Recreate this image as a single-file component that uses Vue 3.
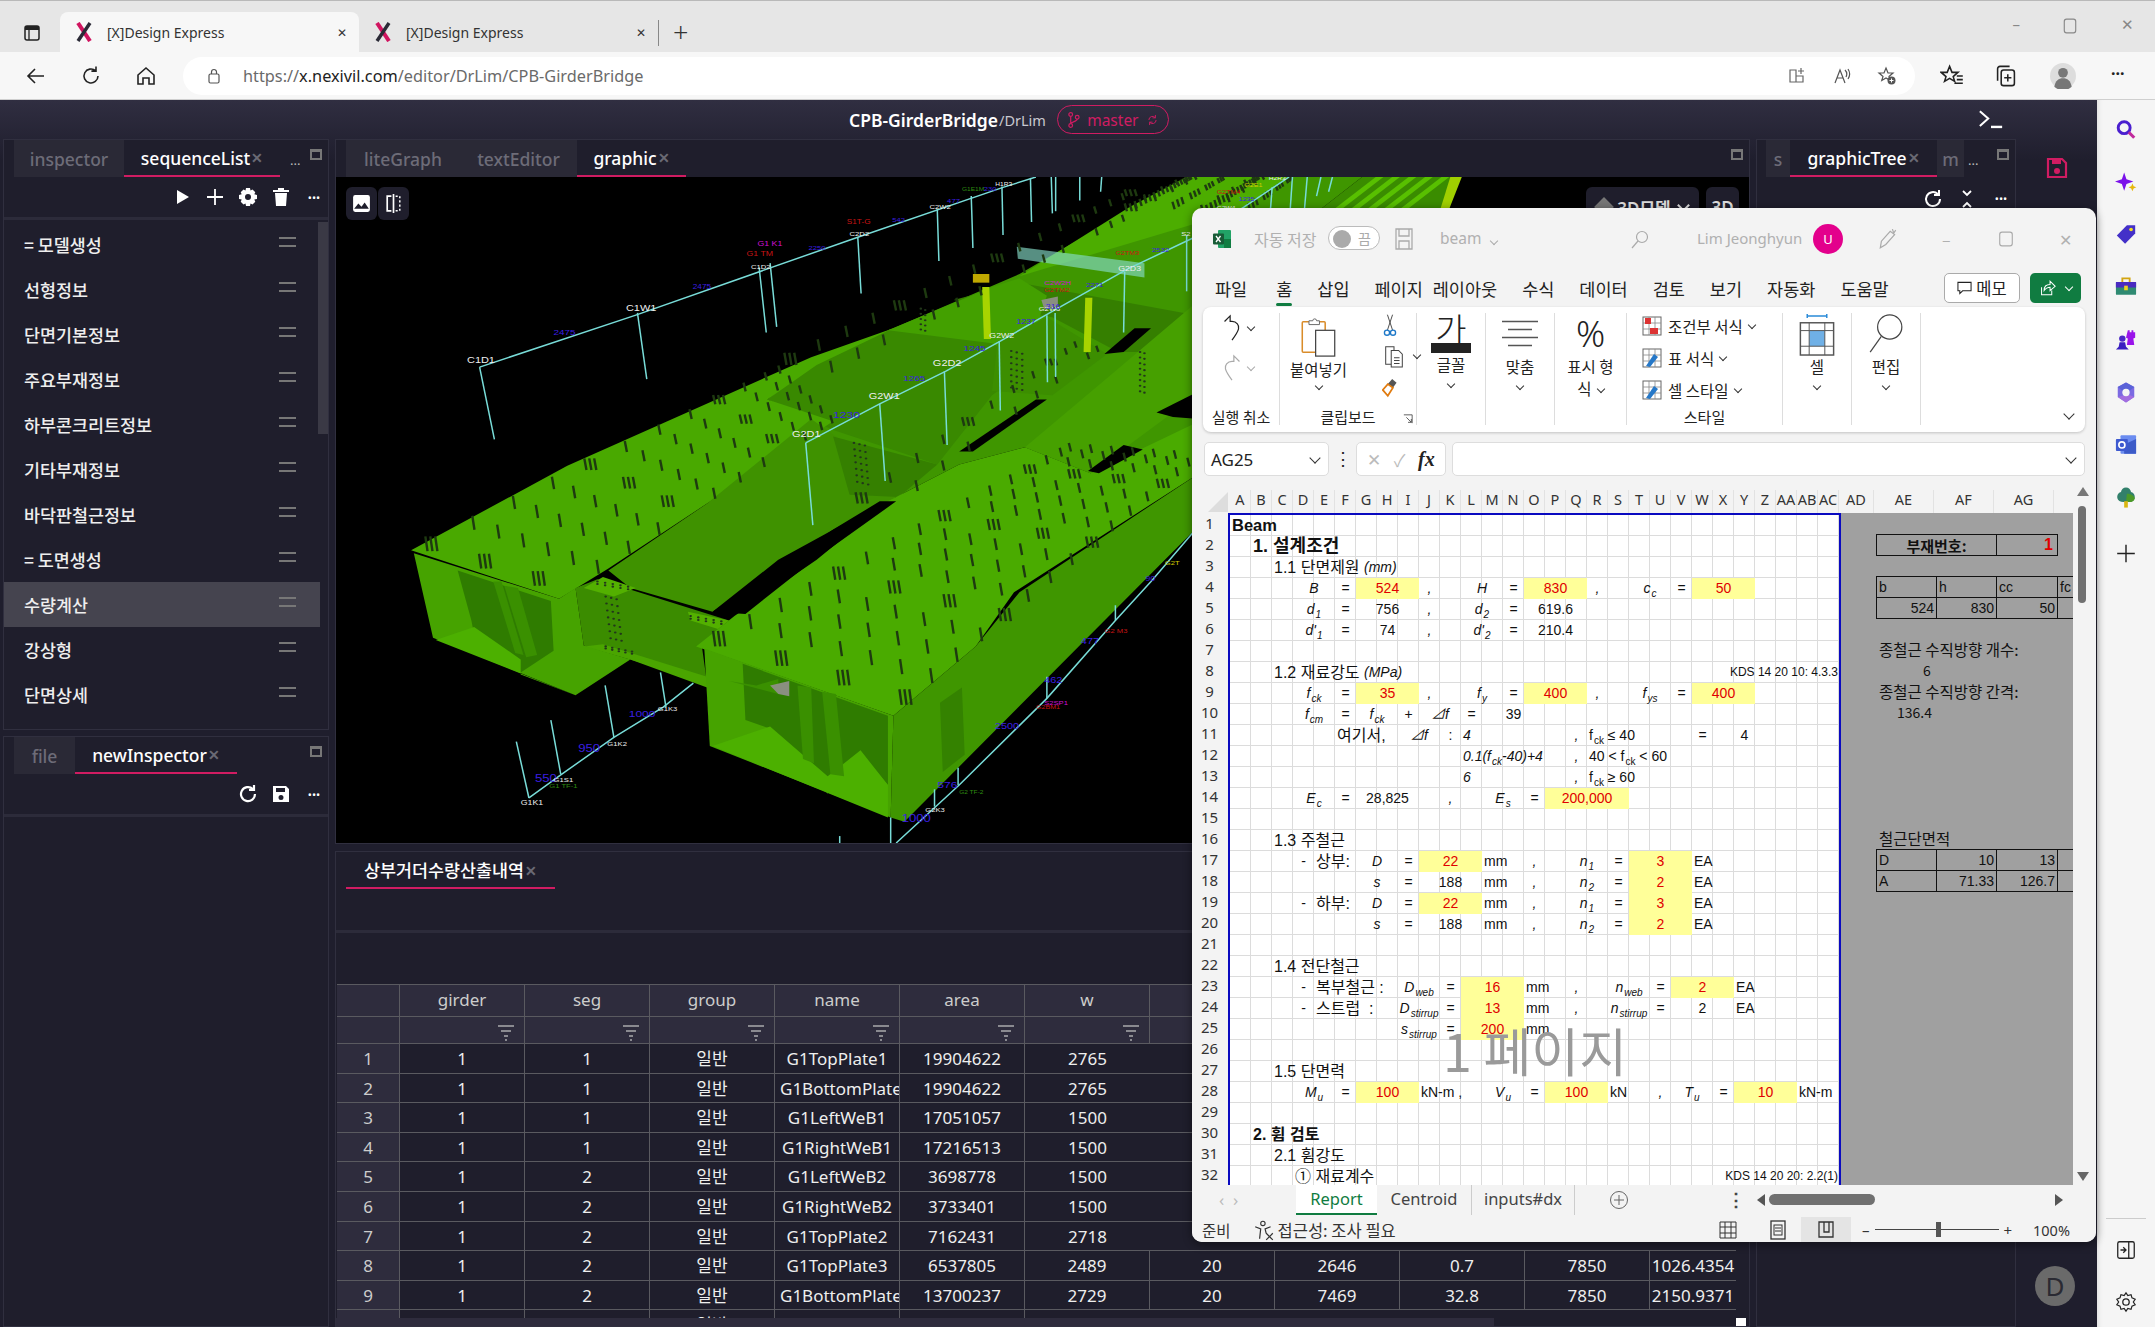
<template>
  <div class="page">
    <!-- browser chrome -->
    <div class="tabstrip">
      <svg class="strip-ico" viewBox="0 0 20 20"><rect x="3" y="3" width="14" height="14" rx="2" fill="none" stroke="#222" stroke-width="1.5"/><rect x="3" y="3" width="14" height="4" fill="#222"/><path d="M7 7v10" stroke="#222" stroke-width="1.3"/></svg>
      <div v-for="(t, i) in browserTabs" :key="i" class="btab" :class="{ on: i === 0 }">
        <svg class="x-logo" viewBox="0 0 16 20"><path d="M2 1l12 18" stroke="#d0145f" stroke-width="4"/><path d="M14 1L2 19" stroke="#2b2a36" stroke-width="3.4"/></svg>
        <span class="btab-title">{{ t }}</span>
        <span class="btab-x">✕</span>
      </div>
      <div class="tab-sep"></div>
      <span class="tab-plus">+</span>
      <div class="win-btns">
        <span class="wb">–</span>
        <svg class="wb-box" viewBox="0 0 14 14"><rect x="2" y="1" width="10" height="12" rx="2" fill="none" stroke="#888"/></svg>
        <span class="wb">✕</span>
      </div>
    </div>
    <div class="toolbar">
      <svg class="nav" viewBox="0 0 24 24"><path d="M20 12H5m6-7l-7 7 7 7" fill="none" stroke="#222" stroke-width="1.6"/></svg>
      <svg class="nav" viewBox="0 0 24 24"><path d="M19 12a7 7 0 1 1-2.4-5.3M17 2.5v4.6h-4.6" fill="none" stroke="#222" stroke-width="1.6"/></svg>
      <svg class="nav" viewBox="0 0 24 24"><path d="M4 11l8-7 8 7v9h-5v-6H9v6H4z" fill="none" stroke="#222" stroke-width="1.6"/></svg>
      <div class="address">
        <svg class="lock" viewBox="0 0 16 16"><rect x="3" y="6" width="10" height="9" rx="1.5" fill="none" stroke="#555" stroke-width="1.2"/><path d="M5.5 6V4a2.5 2.5 0 0 1 5 0v2" fill="none" stroke="#555" stroke-width="1.2"/></svg>
        <span class="url">https://<b>x.nexivil.com</b>/editor/DrLim/CPB-GirderBridge</span>
        <div class="addr-icons">
          <svg viewBox="0 0 20 20"><path d="M3 4h6v12H3zM9 10h7v6H9zM14 2v6M11 5h6" fill="none" stroke="#666" stroke-width="1.2"/></svg>
          <svg viewBox="0 0 20 20"><path d="M3 17L8 4l5 13M5 12h6M13 4c2 2 2 5 1 7M16 3c2 3 2 7 0 10" fill="none" stroke="#555" stroke-width="1.2"/></svg>
          <svg viewBox="0 0 20 20"><path d="M9 2l2 5h5l-4 3.5 1.2 4-4.2-2.6-4.2 2.6L6 10.500 2 7h5z" fill="none" stroke="#555" stroke-width="1.2"/><circle cx="14.500" cy="14.500" r="4" fill="#555"/><path d="M14.500 12.500v4M12.500 14.500h4" stroke="#fff"/></svg>
        </div>
      </div>
      <svg class="tool-ico" viewBox="0 0 20 20"><path d="M8 2l2 5h5l-4 3.500 1.200 4L8 12l-4.200 2.500 1.200-4L1 7h5zM14 10h5M14 13h5M12 16h7" fill="none" stroke="#222" stroke-width="1.3"/></svg>
      <svg class="tool-ico" viewBox="0 0 20 20"><rect x="6" y="5" width="11" height="13" rx="2" fill="none" stroke="#222" stroke-width="1.3"/><path d="M3 14V4a2 2 0 0 1 2-2h8M11.500 8.500v6M8.500 11.500h6" fill="none" stroke="#222" stroke-width="1.3"/></svg>
      <svg class="avatar-ico" viewBox="0 0 24 24"><circle cx="12" cy="12" r="12" fill="#ddd"/><circle cx="12" cy="9" r="4.500" fill="#777"/><path d="M4 22c1-6 4-8 8-8s7 2 8 8a12 12 0 0 1-16 0z" fill="#777"/></svg>
      <span class="tool-more">···</span>
    </div>

    <div class="body">
      <div class="app">
        <header class="app-head">
          <span class="repo">CPB-GirderBridge</span><span class="repo-user">/DrLim</span>
          <span class="branch">
            <svg viewBox="0 0 14 20"><circle cx="4" cy="4" r="2" fill="none" stroke="#d01c62" stroke-width="1.3"/><circle cx="4" cy="16" r="2" fill="none" stroke="#d01c62" stroke-width="1.3"/><circle cx="11" cy="7" r="2" fill="none" stroke="#d01c62" stroke-width="1.3"/><path d="M4 6v8M11 9c0 3-7 3-7 5" fill="none" stroke="#d01c62" stroke-width="1.3"/></svg>
            master
            <svg viewBox="0 0 18 20"><path d="M14 10a5 5 0 0 1-9 3M4 10a5 5 0 0 1 9-3M13 3v4H9M5 17v-4h4" fill="none" stroke="#d01c62" stroke-width="1.3"/></svg>
          </span>
          <svg class="term" viewBox="0 0 28 22"><path d="M2 2l9 8-9 8" fill="none" stroke="#fff" stroke-width="2.200"/><path d="M14 19h12" stroke="#fff" stroke-width="2.600"/></svg>
        </header>

        <div class="work">
          <!-- left column -->
          <div class="col-left">
            <section class="panel seq">
              <div class="tabs">
                <span class="tab" style="width: 110px">inspector</span>
                <span class="tab on" style="width: 156px">sequenceList<i class="tx">✕</i></span>
                <span class="tab-more">...</span>
                <span class="maxi"></span>
              </div>
              <div class="tools">
                <svg viewBox="0 0 20 20"><path d="M5 3l12 7-12 7z" fill="#fff"/></svg>
                <svg viewBox="0 0 20 20"><path d="M10 2v16M2 10h16" stroke="#fff" stroke-width="1.800"/></svg>
                <svg viewBox="0 0 20 20"><path fill="#fff" fill-rule="evenodd" d="M8 1h4l.5 2.500 2-1 2.800 2.800-1 2 2.700.7v4l-2.700.5 1 2.200-2.800 2.800-2-1-.5 2.500H8l-.5-2.500-2 1-2.800-2.800 1-2.200L1 12V8l2.700-.7-1-2 2.800-2.800 2 1zM10 7a3 3 0 1 0 0 6 3 3 0 0 0 0-6z"/></svg>
                <svg viewBox="0 0 20 20"><path d="M7 1h6v2h5v2H2V3h5zM4 6h12l-1 13H5z" fill="#fff"/></svg>
                <span class="dots">•••</span>
              </div>
              <div class="seq-list">
                <div v-for="(s, i) in sequences" :key="i" class="seq-row" :class="{ sel: i === 8 }">
                  <span>{{ s }}</span><span class="grip"></span>
                </div>
                <div class="seq-scroll"></div>
              </div>
            </section>
            <section class="panel grow">
              <div class="tabs">
                <span class="tab" style="width: 61px">file</span>
                <span class="tab on" style="width: 162px">newInspector<i class="tx">✕</i></span>
                <span class="maxi"></span>
              </div>
              <div class="tools">
                <svg viewBox="0 0 20 20"><path d="M17 10a7 7 0 1 1-2.200-5M16 1v5h-5" fill="none" stroke="#fff" stroke-width="2.200"/></svg>
                <svg viewBox="0 0 20 20"><path fill="#fff" fill-rule="evenodd" d="M2 2h13l3 3v13H2zM5 4v4h9V4zM10 11a2.500 2.500 0 1 0 0 5 2.500 2.500 0 0 0 0-5z"/></svg>
                <span class="dots">•••</span>
              </div>
            </section>
          </div>

          <!-- center column -->
          <div class="col-mid">
            <section class="panel gfx">
              <div class="tabs">
                <span class="tab" style="width: 114px">liteGraph</span>
                <span class="tab" style="width: 117px">textEditor</span>
                <span class="tab on" style="width: 109px">graphic<i class="tx">✕</i></span>
                <span class="maxi"></span>
              </div>
              <div class="canvas">
                <svg class="scene" viewBox="-7 16 2578 1538" preserveAspectRatio="none">
                  <polygon v-for="(p, i) in scenePolys" :key="i" :points="p.pts" :fill="p.fill" :fill-opacity="p.op || 1"/>
                  <line v-for="(s, i) in studs" :key="'s' + i" :x1="s[0]" :y1="s[1]" :x2="s[2]" :y2="s[3]" stroke="#1e3a10" class="stud"/>
                  <circle v-for="(d, i) in bolts" :key="'b' + i" :cx="d[0]" :cy="d[1]" r="2.400" fill="#22381a"/>
                  <polyline v-for="(l, i) in cyanLines" :key="'c' + i" :points="l" fill="none" stroke="#78dcd8" class="thin"/>
                  <text v-for="(t, i) in labels" :key="'t' + i" :x="t[0]" :y="t[1]" :fill="t[3]" :font-size="t[4] || 20" class="scene-txt">{{ t[2] }}</text>
                </svg>
                <div class="view-btns">
                  <span class="vb"><svg viewBox="0 0 20 20"><rect x="2" y="2" width="16" height="16" rx="2" fill="#fff"/><path d="M3 15l4-5 3 3 3-4 4 6z" fill="#1e1d2b"/></svg></span>
                  <span class="vb"><svg viewBox="0 0 20 20"><path d="M8 3H4v14h4M10 1v18" fill="none" stroke="#fff" stroke-width="1.600"/><path d="M12 3h4v14h-4" fill="none" stroke="#fff" stroke-width="1.400" stroke-dasharray="2 2"/></svg></span>
                </div>
                <div class="model-btns">
                  <span class="mb wide"><i class="diamond"></i>3D모델 <b class="cv lt"></b></span>
                  <span class="mb">3D</span>
                </div>
              </div>
            </section>
            <section class="panel grow tbl-panel">
              <div class="tabs thin-tabs">
                <span class="tab on" style="width: 209px">상부거더수량산출내역<i class="tx">✕</i></span>
              </div>
              <div class="tbl-tools"></div>
              <div class="tbl-gap"></div>
              <div class="tbl">
                <div class="trow thead">
                  <span v-for="(h, i) in tableHead" :key="i">{{ h }}</span>
                </div>
                <div class="trow tfilter">
                  <span v-for="(h, i) in tableHead" :key="i">
                    <svg v-if="i > 0 && i < 7" viewBox="0 0 18 18"><path d="M1 2h16M4 7h10M7 12h4M8 16h2" stroke="#8a8a90" stroke-width="2"/></svg>
                  </span>
                </div>
                <div v-for="(row, i) in tableRows" :key="i" class="trow tbody">
                  <span v-for="(v, j) in row" :key="j">{{ v }}</span>
                </div>
              </div>
              <div class="tbl-scroll"><i class="tbl-thumb"></i><i class="tbl-corner"></i></div>
            </section>
          </div>

          <!-- right column -->
          <section class="panel col-right">
            <div class="tabs">
              <span class="tab" style="width: 24px">s</span>
              <span class="tab on" style="width: 147px">graphicTree<i class="tx">✕</i></span>
              <span class="tab" style="width: 27px">m</span>
              <span class="tab-more">...</span>
              <span class="maxi"></span>
            </div>
            <div class="tools">
              <svg viewBox="0 0 20 20"><path d="M17 10a7 7 0 1 1-2.200-5M16 1v5h-5" fill="none" stroke="#fff" stroke-width="2"/></svg>
              <svg viewBox="0 0 20 20"><path d="M6 2l4 4 4-4M6 18l4-4 4 4" fill="none" stroke="#fff" stroke-width="1.800"/></svg>
              <span class="dots">•••</span>
            </div>
          </section>
          <div class="col-far">
            <svg class="far-save" viewBox="0 0 24 24"><path d="M3 3h14l4 4v14H3z" fill="none" stroke="#d01c62" stroke-width="2.200"/><path d="M7 3h9v5H7z" fill="#d01c62"/><circle cx="12" cy="15" r="3" fill="#d01c62"/></svg>
            <span class="far-avatar">D</span>
          </div>
        </div>
      </div>

      <!-- edge sidebar -->
      <aside class="edge">
        <svg viewBox="0 0 24 24"><circle cx="10" cy="10" r="6.500" fill="none" stroke="#4a1fcf" stroke-width="3.200"/><path d="M15 15l6 6" stroke="#c02a9c" stroke-width="3.400"/></svg>
        <svg viewBox="0 0 24 24"><path d="M10 1l2.500 7.500L20 11l-7.500 2.500L10 21l-2.500-7.500L0 11l7.500-2.500z" fill="#7a10ea"/><path d="M19 13l1.300 3 3 1.300-3 1.300-1.300 3-1.300-3-3-1.300 3-1.300z" fill="#e6b70c"/></svg>
        <svg viewBox="0 0 24 24"><path d="M13 2h9v9L11 22 2 13z" fill="#4330c8"/><circle cx="17.500" cy="6.500" r="2" fill="#f1e020"/></svg>
        <svg viewBox="0 0 24 24"><path d="M8 6V2h8v4" fill="none" stroke="#d3a512" stroke-width="2"/><rect x="1" y="6" width="22" height="14" rx="1" fill="#2f8a72"/><rect x="1" y="6" width="22" height="6" fill="#4a2bc0"/><rect x="10" y="10" width="4" height="5" fill="#f1d020"/></svg>
        <svg viewBox="0 0 24 24"><circle cx="8" cy="11" r="3.500" fill="#4a27c8"/><path d="M5 15h6l1 5 3 3H1l3-3z" fill="#3a1fc0"/><path d="M14 2h2v2h2V2h2v2h2V2v8l-2 1 1 7h-8l1-7-2-1z" fill="#9a14ea"/></svg>
        <svg viewBox="0 0 24 24"><path d="M12 1l9 5v11l-9 6-9-6V6z" fill="#7b6ae2"/><path d="M3 6l9-5 9 5-5 4H8z" fill="#5a62d8"/><path d="M3 17l9 6 9-6-7-3z" fill="#a36de0"/><circle cx="12" cy="12" r="4" fill="#f5f5f5"/></svg>
        <svg viewBox="0 0 24 24"><rect x="6" y="2" width="17" height="20" rx="1" fill="#6b8cf0"/><path d="M10 12l13-6v16H10z" fill="#3c5bc8"/><rect x="1" y="6" width="13" height="13" rx="1" fill="#3e5ad0"/><circle cx="7.500" cy="12.500" r="3.300" fill="none" stroke="#fff" stroke-width="1.800"/></svg>
        <svg viewBox="0 0 24 24"><path d="M12 1c3 0 5 2 5.500 5 3 .8 4.500 3.500 4 6.500-.5 3-3 4.500-6 4.500H9c-3 0-6-1.500-6.500-4.500C2 9.500 3.500 6.800 6.500 6 7 3 9 1 12 1z" fill="#32806b"/><path d="M13 8c4 0 8 2 8.500 5-.5 3-3 4-6 4H12z" fill="#4c9a28"/><rect x="10" y="16" width="4" height="7" fill="#d9b612"/></svg>
        <svg class="edge-plus" viewBox="0 0 20 20"><path d="M10 2v16M2 10h16" stroke="#222" stroke-width="1.300"/></svg>
        <div class="edge-foot">
          <svg viewBox="0 0 24 24"><rect x="3" y="3" width="18" height="18" rx="2" fill="none" stroke="#222" stroke-width="1.400"/><path d="M15 3v18M6 12h6m-3-3l3 3-3 3" fill="none" stroke="#222" stroke-width="1.400"/></svg>
          <svg viewBox="0 0 24 24"><circle cx="12" cy="12" r="3.500" fill="none" stroke="#222" stroke-width="1.400"/><path d="M12 2l2 3 3.500-1 1 3.500L22 9l-2 3 2 3-3.500 1.500-1 3.500-3.500-1-2 3-2-3-3.500 1-1-3.500L2 15l2-3-2-3 3.500-1.500 1-3.500L10 5z" fill="none" stroke="#222" stroke-width="1.300"/></svg>
        </div>
      </aside>
    </div>

    <!-- excel window, floating over the app -->
    <div class="xl">
      <div class="xl-title">
        <svg class="xl-logo" viewBox="0 0 20 20"><rect x="6" y="1" width="13" height="18" rx="1" fill="#21a366"/><rect x="12" y="10" width="7" height="9" fill="#107c41"/><rect x="1" y="4.500" width="11" height="11" rx="1" fill="#185c37"/><path d="M4 7l4.500 6M8.500 7L4 13" stroke="#fff" stroke-width="1.300"/></svg>
        <span class="xl-dim t-auto">자동 저장</span>
        <span class="toggle"><i></i>끔</span>
        <svg class="xl-save" viewBox="0 0 20 24"><path d="M2 2h16v20H2zM5 2v7h10V2M5 22v-8h10v8" fill="none" stroke="#aaa" stroke-width="1.300"/></svg>
        <span class="xl-dim t-beam">beam <b class="cv gr"></b></span>
        <svg class="xl-search" viewBox="0 0 20 20"><circle cx="12" cy="7" r="5.500" fill="none" stroke="#aaa" stroke-width="1.200"/><path d="M8 11l-6 7" stroke="#aaa" stroke-width="1.200"/></svg>
        <span class="xl-dim t-user">Lim Jeonghyun</span>
        <span class="xl-u">U</span>
        <svg class="xl-pen" viewBox="0 0 20 20"><path d="M3 18l1-6 8-9 4 3-8 9zM14 1l1 3M17 2l-2 3" fill="none" stroke="#aaa" stroke-width="1.100"/></svg>
        <span class="xl-dim t-min">–</span>
        <svg class="xl-max" viewBox="0 0 14 14"><rect x="1.500" y="1" width="11" height="12" rx="2" fill="none" stroke="#aaa"/></svg>
        <span class="xl-dim t-close">✕</span>
      </div>
      <div class="xl-menu">
        <span v-for="m in menus" :key="m" class="menu-it" :class="{ on: m === '홈' }">{{ m }}</span>
        <div class="menu-right">
          <span class="memo-btn"><svg viewBox="0 0 16 16"><path d="M1 2h14v9H6l-3 3v-3H1z" fill="none" stroke="#222" stroke-width="1.100"/></svg>메모</span>
          <span class="share-btn"><svg viewBox="0 0 20 20"><path d="M3 9v9h12v-5M6 13c0-5 3-7 7-7V2l6 6-6 5V9c-3 0-5 1-7 4z" fill="none" stroke="#fff" stroke-width="1.200"/></svg><b class="cv wh"></b></span>
        </div>
      </div>
      <div class="ribbon">
        <div class="rg" style="width: 77px">
          <div class="undo">
            <svg viewBox="0 0 20 30"><path d="M2 8l6-6v6h2c5 0 8 4 7 8-1 4-4 8-7 12" fill="none" stroke="#222" stroke-width="1.300"/></svg><b class="cv"></b>
            <svg viewBox="0 0 20 30"><path d="M18 8l-6-6v6h-2c-5 0-8 4-7 8 1 4 4 8 7 12" fill="none" stroke="#aaa" stroke-width="1.300"/></svg><b class="cv gr"></b>
          </div>
          <span class="rg-label">실행 취소</span>
        </div>
        <div class="rg" style="width: 137px">
          <div class="clip">
            <div class="paste">
              <svg viewBox="0 0 36 44"><rect x="1" y="6" width="24" height="32" rx="1" fill="#fff" stroke="#d98c2a" stroke-width="1.600"/><path d="M8 9V5h4a2 2 0 0 1 4 0h3v4z" fill="#fff" stroke="#666"/><rect x="15" y="15" width="20" height="27" fill="#fff" stroke="#444" stroke-width="1.300"/></svg>
              <span>붙여넣기</span><b class="cv"></b>
            </div>
            <div class="clip-side">
              <svg viewBox="0 0 16 28"><path d="M5 2l6 18M11 2L5 20" stroke="#444" stroke-width="1.100"/><circle cx="4.500" cy="23" r="3" fill="none" stroke="#1e78c8" stroke-width="1.600"/><circle cx="11.500" cy="23" r="3" fill="none" stroke="#1e78c8" stroke-width="1.600"/></svg>
              <span class="copy"><svg viewBox="0 0 20 26"><path d="M1 3h9v19H1z" fill="#fff" stroke="#444" stroke-width="1.100"/><path d="M7 7h8l4 4v14H7zM10 15h6M10 18h6M10 21h6" fill="#fff" stroke="#444" stroke-width="1.100"/></svg><b class="cv"></b></span>
              <svg viewBox="0 0 22 26"><path d="M14 2l6 5-5 7-7-5z" fill="#555"/><path d="M8 9l7 5-7 11-7-8z" fill="none" stroke="#e07b10" stroke-width="2.400"/></svg>
            </div>
          </div>
          <span class="rg-label">클립보드</span>
          <svg class="launch" viewBox="0 0 12 12"><path d="M1 1h10v10M4 4l6 6M10 6v4H6" fill="none" stroke="#444"/></svg>
        </div>
        <div class="rg big" style="width: 69px">
          <span class="ga">가</span><i class="ga-bar"></i>
          <span class="big-t">글꼴</span><b class="cv"></b>
        </div>
        <div class="rg big" style="width: 69px">
          <svg class="big-ic" viewBox="0 0 36 36"><path d="M0 6h36M6 14h24M0 22h36M6 30h24" stroke="#555" stroke-width="1.500"/></svg>
          <span class="big-t">맞춤</span><b class="cv"></b>
        </div>
        <div class="rg big" style="width: 72px">
          <span class="pct">%</span>
          <span class="big-t">표시 형</span><span class="big-t sec">식 <b class="cv"></b></span>
        </div>
        <div class="rg" style="width: 156px">
          <div class="styles">
            <div v-for="s in styleRows" :key="s"><svg viewBox="0 0 20 20"><rect x="1" y="1" width="18" height="18" fill="#fff" stroke="#666"/><path d="M1 7h18M1 13h18M7 1v18M13 1v18" stroke="#888" stroke-width=".8"/><rect v-if="s === '조건부 서식'" x="3" y="2" width="6" height="6" fill="#d33"/><rect v-if="s === '조건부 서식'" x="8" y="12" width="8" height="6" fill="#d33"/><path v-if="s !== '조건부 서식'" d="M4 18l8-12 4 3-8 10z" fill="#2678c8"/></svg>{{ s }} <b class="cv"></b></div>
          </div>
          <span class="rg-label">스타일</span>
        </div>
        <div class="rg big" style="width: 69px">
          <svg class="big-ic cell-ic" viewBox="0 0 36 44"><path d="M8 1v4M28 1v4M8 3h20" stroke="#2a8ad8" stroke-width="1.500"/><rect x="1" y="10" width="34" height="33" fill="#fff" stroke="#555" stroke-width="1.500"/><rect x="10" y="18" width="16" height="16" fill="#6fb0e6"/><path d="M1 18h34M1 34h34M10 10v33M26 10v33" stroke="#555"/></svg>
          <span class="big-t">셀</span><b class="cv"></b>
        </div>
        <div class="rg big" style="width: 69px">
          <svg class="big-ic" viewBox="0 0 36 44"><circle cx="22" cy="15" r="13" fill="none" stroke="#444" stroke-width="1.300"/><path d="M13 25L1 42" stroke="#444" stroke-width="1.300"/></svg>
          <span class="big-t">편집</span><b class="cv"></b>
        </div>
        <b class="cv rb-collapse"></b>
      </div>
      <div class="formula">
        <div class="name-box">AG25<b class="cv"></b></div>
        <span class="f-dots">⋮</span>
        <div class="fx-box"><span class="fx-x">✕</span><span class="fx-x">✓</span><i>fx</i></div>
        <div class="f-input"><b class="cv"></b></div>
      </div>

      <div class="sheet-wrap">
        <div class="col-heads">
          <span class="corner"><i></i></span>
          <span v-for="h in colHeads" :key="h" class="ch">{{ h }}</span>
          <span class="ch ad">AD</span>
          <span v-for="h in wideHeads" :key="h" class="ch wide">{{ h }}</span>
        </div>
        <div class="sheet-body">
          <div class="row-heads">
            <span v-for="n in 32" :key="n">{{ n }}</span>
          </div>
          <div class="sheet">
            <div class="watermark">1 페이지</div>
            <div v-for="(c, i) in cells" :key="i" class="cell" :class="c.cls" :style="c.pos">{{ c.t }}<sub v-if="c.sub">{{ c.sub }}</sub><span v-if="c.tail" class="tl">{{ c.tail }}</span></div>
          </div>
          <div class="gray">
            <div class="g-grid">
              <div class="g-box b1" style="grid-row: 2; grid-column: 2 / span 2">부재번호:</div>
              <div class="g-box red" style="grid-row: 2; grid-column: 4">1</div>
              <div v-for="(c, i) in grayCells" :key="i" class="g-box" :class="c.cls" :style="c.pos">{{ c.t }}</div>
              <div class="g-note" style="grid-row: 7; grid-column: 2 / span 4">종철근 수직방향 개수:</div>
              <div class="g-note six" style="grid-row: 8; grid-column: 2">6</div>
              <div class="g-note" style="grid-row: 9; grid-column: 2 / span 4">종철근 수직방향 간격:</div>
              <div class="g-note sixb" style="grid-row: 10; grid-column: 2">136.4</div>
              <div class="g-note" style="grid-row: 16; grid-column: 2 / span 3">철근단면적</div>
            </div>
          </div>
          <div class="v-scroll"><i class="up"></i><i class="thumb"></i><i class="down"></i></div>
        </div>
      </div>

      <div class="sheet-tabs">
        <span class="st-nav">‹ &nbsp;›</span>
        <span class="st on">Report</span>
        <span class="st">Centroid</span>
        <span class="st">inputs#dx</span>
        <svg class="st-add" viewBox="0 0 20 20"><circle cx="10" cy="10" r="8.500" fill="none" stroke="#666"/><path d="M10 5v10M5 10h10" stroke="#666"/></svg>
        <span class="st-dots">⋮</span>
        <div class="h-scroll"><i class="l"></i><i class="thumb"></i><i class="r"></i></div>
      </div>
      <div class="status">
        <span class="s-ready">준비</span>
        <svg class="s-acc" viewBox="0 0 20 20"><circle cx="9" cy="4" r="2" fill="none" stroke="#333"/><path d="M2 7l5 2-1 9M16 7l-5 2 1 4M12 13l6 6M18 13l-6 6" fill="none" stroke="#333" stroke-width="1.100"/></svg>
        <span>접근성: 조사 필요</span>
        <div class="s-views">
          <svg viewBox="0 0 20 20"><path d="M2 2h16v16H2zM2 7h16M2 13h16M7 2v16M13 2v16" fill="none" stroke="#333"/></svg>
          <svg viewBox="0 0 20 20"><rect x="3" y="1" width="14" height="18" fill="none" stroke="#333" stroke-width="1.300"/><rect x="6" y="5" width="8" height="10" fill="none" stroke="#333"/><path d="M7 8h6M7 11h6" stroke="#333"/></svg>
          <span class="s-on"><svg viewBox="0 0 20 20"><path d="M3 2h14v15H3zM8 2v10h5V2" fill="none" stroke="#333" stroke-width="1.300"/></svg></span>
        </div>
        <div class="zoom"><span>–</span><i class="z-line"><b></b></i><span>+</span></div>
        <span class="s-pct">100%</span>
      </div>
    </div>
  </div>
</template>

<script setup>
const browserTabs = ['[X]Design Express', '[X]Design Express'];
const sequences = ['= 모델생성', '선형정보', '단면기본정보', '주요부재정보', '하부콘크리트정보', '기타부재정보', '바닥판철근정보', '= 도면생성', '수량계산', '강상형', '단면상세'];
const menus = ['파일', '홈', '삽입', '페이지 레이아웃', '수식', '데이터', '검토', '보기', '자동화', '도움말'];
const styleRows = ['조건부 서식', '표 서식', '셀 스타일'];

const tableHead = ['', 'girder', 'seg', 'group', 'name', 'area', 'w', '', '', '', '', ''];
const rowsRaw = [
  [1, 1, 1, 'G1TopPlate1', 19904622, 2765],
  [2, 1, 1, 'G1BottomPlate1', 19904622, 2765],
  [3, 1, 1, 'G1LeftWeB1', 17051057, 1500],
  [4, 1, 1, 'G1RightWeB1', 17216513, 1500],
  [5, 1, 2, 'G1LeftWeB2', 3698778, 1500],
  [6, 1, 2, 'G1RightWeB2', 3733401, 1500],
  [7, 1, 2, 'G1TopPlate2', 7162431, 2718],
  [8, 1, 2, 'G1TopPlate3', 6537805, 2489, 20, 2646, 0.7, 7850, '1026.4354'],
  [9, 1, 2, 'G1BottomPlate2', 13700237, 2729, 20, 7469, 32.8, 7850, '2150.9371'],
  [10, 1, 2, '', '', ''],
];
// 표 행: 세번째 값 뒤에 group 컬럼을 끼워 넣는다
const tableRows = rowsRaw.map(r => [r[0], r[1], r[2], '일반', ...r.slice(3)]);

// ---- excel sheet ----
const colHeads = 'A B C D E F G H I J K L M N O P Q R S T U V W X Y Z AA AB AC'.split(' ');
const wideHeads = ['AE', 'AF', 'AG'];

const C = (r, c, s, t, cls = '', sub = '', tail = '') => ({
  t, sub, tail,
  cls: cls + (/[가-힣]/.test(t) ? ' ko' : ''),
  pos: { gridRow: r, gridColumn: `${c + 1} / span ${s}` },
});
const eq = (r, c) => C(r, c, 1, '=');
const comma = (r, c) => C(r, c, 1, ',', 'i');

const rebarRow = (r, label, first) => [
  ...(label ? [C(r, 3, 1, '-'), C(r, 4, 2, label, 'l')] : []),
  C(r, 6, 2, first ? 'D' : 's', 'i'), eq(r, 8),
  first ? C(r, 9, 3, '22', 'y') : C(r, 9, 3, '188'),
  C(r, 12, 2, 'mm', 'l'), comma(r, 14),
  C(r, 16, 2, 'n', 'i', first ? '1' : '2'), eq(r, 18),
  C(r, 19, 3, first ? '3' : '2', 'y'), C(r, 22, 2, 'EA', 'l'),
];

const cells = [
  C(1, 0, 4, 'Beam', 'b l'),
  C(2, 1, 6, '1. 설계조건', 'b l lg'),
  C(3, 2, 10, '1.1 단면제원 ', 'l ti', '', '(mm)'),
  C(4, 3, 2, 'B', 'i'), eq(4, 5), C(4, 6, 3, '524', 'y'), comma(4, 9), C(4, 11, 2, 'H', 'i'), eq(4, 13), C(4, 14, 3, '830', 'y'), comma(4, 17), C(4, 19, 2, 'c', 'i', 'c'), eq(4, 21), C(4, 22, 3, '50', 'y'),
  C(5, 3, 2, 'd', 'i', '1'), eq(5, 5), C(5, 6, 3, '756'), comma(5, 9), C(5, 11, 2, 'd', 'i', '2'), eq(5, 13), C(5, 14, 3, '619.6'),
  C(6, 3, 2, "d'", 'i', '1'), eq(6, 5), C(6, 6, 3, '74'), comma(6, 9), C(6, 11, 2, "d'", 'i', '2'), eq(6, 13), C(6, 14, 3, '210.4'),
  C(8, 2, 10, '1.2 재료강도 ', 'l ti', '', '(MPa)'), C(8, 20, 9, 'KDS 14 20 10: 4.3.3', 'r sm'),
  C(9, 3, 2, 'f', 'i', 'ck'), eq(9, 5), C(9, 6, 3, '35', 'y'), comma(9, 9), C(9, 11, 2, 'f', 'i', 'y'), eq(9, 13), C(9, 14, 3, '400', 'y'), comma(9, 17), C(9, 19, 2, 'f', 'i', 'ys'), eq(9, 21), C(9, 22, 3, '400', 'y'),
  C(10, 3, 2, 'f', 'i', 'cm'), eq(10, 5), C(10, 6, 2, 'f', 'i', 'ck'), C(10, 8, 1, '+'), C(10, 9, 2, '⊿f', 'i'), eq(10, 11), C(10, 12, 3, '39'),
  C(11, 5, 3, '여기서,', 'l'), C(11, 8, 2, '⊿f', 'i'), C(11, 10, 1, ':'), C(11, 11, 5, '4', 'i l'), comma(11, 16), C(11, 17, 5, 'f', 'l', 'ck', ' ≤ 40'), eq(11, 22), C(11, 24, 1, '4'),
  C(12, 11, 5, '0.1(f', 'i l', 'ck', '-40)+4'), comma(12, 16), C(12, 17, 8, '40 < f', 'l', 'ck', ' < 60'),
  C(13, 11, 5, '6', 'i l'), comma(13, 16), C(13, 17, 5, 'f', 'l', 'ck', ' ≥ 60'),
  C(14, 3, 2, 'E', 'i', 'c'), eq(14, 5), C(14, 6, 3, '28,825'), comma(14, 10), C(14, 12, 2, 'E', 'i', 's'), eq(14, 14), C(14, 15, 4, '200,000', 'y'),
  C(16, 2, 8, '1.3 주철근', 'l'),
  ...rebarRow(17, '상부:', true), ...rebarRow(18, '', false), ...rebarRow(19, '하부:', true), ...rebarRow(20, '', false),
  C(22, 2, 8, '1.4 전단철근', 'l'),
  C(23, 3, 1, '-'), C(23, 4, 4, '복부철근 :', 'l'), C(23, 8, 2, 'D', 'i', 'web'), eq(23, 10), C(23, 11, 3, '16', 'y'), C(23, 14, 2, 'mm', 'l'), comma(23, 16), C(23, 18, 2, 'n', 'i', 'web'), eq(23, 20), C(23, 21, 3, '2', 'y'), C(23, 24, 2, 'EA', 'l'),
  C(24, 3, 1, '-'), C(24, 4, 4, '스트럽  :', 'l'), C(24, 8, 2, 'D', 'i', 'stirrup'), eq(24, 10), C(24, 11, 3, '13', 'y'), C(24, 14, 2, 'mm', 'l'), comma(24, 16), C(24, 18, 2, 'n', 'i', 'stirrup'), eq(24, 20), C(24, 21, 3, '2'), C(24, 24, 2, 'EA', 'l'),
  C(25, 8, 2, 's', 'i', 'stirrup'), eq(25, 10), C(25, 11, 3, '200', 'y'), C(25, 14, 2, 'mm', 'l'),
  C(27, 2, 8, '1.5 단면력', 'l'),
  C(28, 3, 2, 'M', 'i', 'u'), eq(28, 5), C(28, 6, 3, '100', 'y'), C(28, 9, 3, 'kN-m ,', 'l'), C(28, 12, 2, 'V', 'i', 'u'), eq(28, 14), C(28, 15, 3, '100', 'y'), C(28, 18, 2, 'kN', 'l'), comma(28, 20), C(28, 21, 2, 'T', 'i', 'u'), eq(28, 23), C(28, 24, 3, '10', 'y'), C(28, 27, 2, 'kN-m', 'l'),
  C(30, 1, 6, '2. 휨 검토', 'b l'),
  C(31, 2, 8, '2.1 휨강도', 'l'),
  C(32, 3, 8, '① 재료계수', 'l'), C(32, 20, 9, 'KDS 14 20 20: 2.2(1)', 'r sm'),
];

const G = (r, c, t, cls = '') => ({ t, cls, pos: { gridRow: r, gridColumn: c } });
const grayCells = [
  G(4, 2, 'b', 'lf'), G(4, 3, 'h', 'lf'), G(4, 4, 'cc', 'lf'), G(4, 5, 'fc', 'lf'),
  G(5, 2, '524', 'rt'), G(5, 3, '830', 'rt'), G(5, 4, '50', 'rt'), G(5, 5, ''),
  G(17, 2, 'D', 'lf'), G(17, 3, '10', 'rt'), G(17, 4, '13', 'rt'), G(17, 5, ''),
  G(18, 2, 'A', 'lf'), G(18, 3, '71.33', 'rt'), G(18, 4, '126.7', 'rt'), G(18, 5, ''),
];

// ---- 3D scene, coordinates in the 860x680 crop units ----
const P = (fill, pts, op) => ({ fill, pts, op });
const farStripes = [0, 1, 2, 3, 4].map(n => {
  const x = 1890 + n * 30;
  return P('#58c000', `${x},16 ${x + 14},16 ${x - 60},88 ${x - 74},88`);
});
const scenePolys = [
  // base behind the far webs
  P('#3f9600', '860,575 1010,365 1240,240 1545,16 1740,16 1640,620 1370,700 1250,640 1130,680 1000,765'),
  // far continuation of the bridge
  P('#4cad00', '1441,85 1545,16 1732,16 1650,90 1240,245'),
  P('#3f9600', '1732,16 1865,16 1790,90 1650,90'),
  P('#3a8c00', '1865,16 2039,16 2011,90 1790,90'),
  ...farStripes,
  P('#a0d000', '2026,16 2047,16 2024,90 2008,90'),
  P('#357f00', '1240,260 1540,330 1568,420 1420,420 1300,340 1120,300'),
  // G1 far pocket
  P('#398900', '860,445 1010,365 1210,395 1290,430 1190,520 1090,680 900,600 780,530'),
  P('#43a000', '1000,370 1190,270 1240,250 1290,290 1250,440 1190,400'),
  P('#3c8e00', '1200,395 1290,340 1400,425 1300,520 1190,510'),
  // G1 deck
  P('#49a900', '130,878 415,683 860,432 1010,365 870,450 780,530 900,580 670,770 490,920 400,990'),
  // G1 recess
  P('#3f9200', '490,925 670,770 860,575 910,620 1090,680 1010,760 930,810 800,900 680,1020 530,965'),
  P('#358000', '900,615 1090,680 1020,755 930,750'),
  // cross beam
  P('#3b8c00', '430,965 470,945 710,1040 660,1095 670,1185 530,1130 445,1098'),
  P('#53b000', '445,965 480,940 540,965 500,985'),
  P('#53b000', '635,1020 710,1040 690,1060 640,1040'),
  P('#4aa500', '445,1100 480,1095 670,1170 670,1195 530,1130'),
  // G1 front face
  P('#46a300', '135,885 400,990 430,965 445,1098 530,1130 430,1213 170,1080'),
  P('#2f7c00', '215,925 385,995 390,1110 330,1160 250,1105 240,1040'),
  P('#4cb000', '175,1085 245,1055 330,1130 330,1165 430,1213'),
  P('#3a9000', '280,950 295,950 335,1120 320,1115'),
  P('#3a9000', '300,960 325,965 360,1120 340,1125'),
  // right side upper webs
  P('#46a000', '1250,640 1400,480 1568,300 1568,520 1520,560 1370,700'),
  // G2 deck
  P('#4aab00', '650,1100 720,1030 870,900 1000,765 1130,680 1250,640 1370,700 1568,580 1568,700 1230,975 1160,1100 1010,1260'),
  // G2 side
  P('#3f9600', '1010,1260 1160,1100 1240,975 1568,700 1568,820 1030,1505 1005,1495'),
  P('#348200', '1095,1230 1135,1195 1140,1350 1100,1390'),
  // G2 front face
  P('#46a300', '665,1105 1010,1260 1005,1495 675,1330'),
  P('#2f7c00', '735,1140 1000,1260 1000,1420 950,1345 890,1440 785,1290 740,1270'),
  P('#4cb000', '680,1330 785,1285 890,1400 950,1340 1000,1420 1000,1495'),
  P('#3a9000', '835,1190 860,1195 865,1370 845,1360'),
  P('#3a9000', '880,1205 905,1210 920,1400 895,1395'),
  P('#3a9000', '710,1180 800,1210 800,1175 760,1190'),
  P('#8a8f80', '785,1190 820,1180 820,1215 800,1210'),
  // black slits
  P('#000', '680,1020 740,1025 860,905 1015,765 985,765 900,830'),
  P('#000', '1130,650 1155,650 1290,530 1270,530'),
  P('#000', '1365,695 1385,700 1465,645 1430,635'),
  P('#000', '1395,425 1430,420 1480,365 1450,365'),
  P('#000', '1490,560 1568,510 1568,575 1520,570'),
  // yellow stiffeners, teal plate
  P('#a8d400', '1172,270 1185,270 1188,390 1175,390'),
  P('#a8d400', '1360,295 1373,295 1370,420 1357,420'),
  P('#c0a800', '1155,240 1185,240 1185,260 1155,260'),
  P('#8a8f80', '1280,300 1310,292 1310,315 1285,320'),
  P('#85dcc8', '1235,177 1468,215 1468,248 1237,205', 0.65),
];

// 스터드는 데크 네 꼭짓점 사이를 보간해서 생성
function lattice(q, nu, nv, h) {
  const out = [];
  for (let i = 0; i <= nu; i++) {
    for (let j = 0; j <= nv; j++) {
      const u = 1 - Math.pow(1 - i / nu, 1.35);
      const v = j / nv;
      const ax = q[0][0] + (q[3][0] - q[0][0]) * u;
      const ay = q[0][1] + (q[3][1] - q[0][1]) * u;
      const bx = q[1][0] + (q[2][0] - q[1][0]) * u;
      const by = q[1][1] + (q[2][1] - q[1][1]) * u;
      const x = ax + (bx - ax) * v;
      const y = ay + (by - ay) * v;
      const len = h * (1 - u * 0.45);
      const triple = i % 4 === 0;
      for (const off of triple ? [-9, 0, 9] : [0]) {
        if (triple && j % 2 === 1) continue;
        out.push([x + off, y - len, x + off + 4, y]);
      }
    }
  }
  return out;
}
const studs = [
  ...lattice([[165, 880], [410, 980], [895, 585], [800, 470]], 11, 5, 34),
  ...lattice([[690, 1100], [1030, 1235], [1560, 670], [1330, 650]], 15, 6, 36),
  ...lattice([[820, 450], [845, 500], [1441, 110], [1441, 60]], 16, 1, 28),
  ...lattice([[1441, 95], [1650, 100], [1735, 22], [1550, 22]], 16, 3, 18),
  ...lattice([[950, 770], [1000, 790], [1380, 420], [1340, 410]], 10, 1, 26),
];

function dots(x0, y0, dx, dy, nx, ny, skew = 0) {
  const out = [];
  for (let i = 0; i < nx; i++) for (let j = 0; j < ny; j++) out.push([x0 + i * dx + j * skew, y0 + j * dy + i * 3]);
  return out;
}
const bolts = [
  ...dots(485, 985, 10, 16, 3, 7, 1.500),
  ...dots(938, 630, 10, 15, 3, 7, 1),
  ...dots(1225, 418, 10, 14, 3, 7),
  ...dots(1460, 420, 8, 13, 2, 8),
  ...dots(1060, 320, 8, 12, 2, 5),
  ...dots(470, 950, 14, 6, 5, 2),
  ...dots(640, 1030, 14, 6, 5, 2),
  ...dots(485, 1100, 12, 5, 5, 2),
];

const cyanLines = [
  '255,455 540,335 945,155 1210,40 1270,16',
  '255,455 282,622', '543,330 560,483', '765,225 778,375', '785,215 797,362', '945,155 951,285', '1090,90 1093,210', '1152,60 1155,180', '1208,38 1210,150', '1260,18 1262,120', '1298,16 1300,100', '1350,16 1350,70', '1390,16 1388,50', '1306,16 1306,95',
  '850,630 985,540 1105,465 1205,395 1295,330 1435,230 1568,150 1650,85 1732,16',
  '850,630 863,820', '985,540 995,718', '1103,465 1108,635', '1203,395 1205,555', '1290,335 1291,490', '1305,330 1306,478', '1432,235 1430,375', '1545,150 1545,280',
  '1701,40 1698,90', '1738,16 1734,90', '1765,16 1760,90', '1790,16 1782,60', '1811,16 1804,50',
  '345,1450 405,1395 500,1310 590,1240 645,1185',
  '345,1450 322,1320', '403,1395 385,1270', '500,1310 484,1190', '595,1240 585,1160',
  '1015,1554 1130,1420 1290,1220 1415,1040 1480,950 1568,820',
  '1085,1470 1085,1430', '1128,1420 1128,1380', '1005,1495 1005,1554', '1290,1220 1290,1170', '1415,1040 1415,1005', '912,1554 912,1538',
];

const W = '#eeeeee', B = '#3a1fe0', R = '#c81414', M = '#d010d0', Gn = '#2e8a10';
const labels = [
  [232, 445, 'C1D1', W], [522, 325, 'C1W1', W], [750, 228, 'C1D2', W, 14], [930, 153, 'C2D2', W, 14], [1076, 90, 'C2W2', W, 14], [1196, 36, 'H1R3', W, 12],
  [390, 380, '2475', B, 18], [644, 274, '2475', B, 15], [855, 185, '2250', B, 14], [1008, 120, '542', B, 14], [1108, 75, '477', B, 14], [1175, 48, '230', B, 14],
  [925, 124, 'S1T-G', R, 15], [742, 198, 'G1 TM', R, 16], [762, 175, 'G1 K1', M, 16], [1135, 48, 'G1E1M', Gn, 12],
  [825, 616, 'G2D1', W], [965, 528, 'G2W1', W], [1082, 452, 'G2D2', W], [1185, 387, 'G2W2', W, 16], [1275, 326, 'G2W3', W, 14], [1420, 232, 'G2D3', W, 16], [1535, 152, 'S2', W, 14],
  [900, 572, '1230', B, 22], [1028, 488, '1265', B, 18], [1138, 418, '1245', B, 18], [1234, 356, '1237', B, 16], [1288, 322, '316', B, 16], [1362, 270, '2271', B, 14], [1482, 190, '2532', B, 14],
  [1285, 265, 'C2W2H', M, 14], [1285, 282, 'G2TM2', R, 14], [1415, 196, 'G2TM3', R, 13],
  [1600, 55, 'G2TM4', R, 13], [1650, 40, 'G2E1', '#d0c800', 13], [1695, 24, 'H2R3', W, 12], [1640, 72, '1235', B, 13], [1600, 92, 'G2W4', W, 12],
  [356, 1412, '550', B, 24], [435, 1345, '950', B, 24], [527, 1262, '1000', B, 22], [330, 1466, 'G1K1', W, 16], [390, 1412, 'G1S1', W, 14], [382, 1426, 'G1 TF-1', Gn, 14], [488, 1330, 'G1K2', W, 14], [580, 1250, 'G1K3', W, 14],
  [1025, 1505, '1000', B, 24], [1090, 1428, '576', B, 22], [1068, 1482, 'G2K3', W, 14], [1130, 1440, 'G2 TF-2', Gn, 12], [1195, 1290, '2500', B, 20], [1285, 1185, '462', B, 20], [1352, 1095, '477', B, 20], [1470, 948, '90', B, 16], [1505, 912, 'G2T', '#d0c800', 14],
  [1285, 1235, 'S2SP1', M, 14], [1270, 1245, 'G2BM1', R, 13], [1395, 1068, 'G2 M3', R, 14],
];
</script>

<style scoped>
.page { position: relative; width: 2155px; height: 1327px; overflow: hidden; font-family: "Noto Sans", "Noto Sans CJK KR", sans-serif; background: #1e1d2b; }

/* 공용 꺾쇠 */
.cv { display: inline-block; width: 6px; height: 6px; border: solid #333; border-width: 0 1.4px 1.4px 0; transform: rotate(45deg); box-sizing: border-box; margin-top: -3px; flex: none; }
.cv.gr { border-color: #aaa; }
.cv.wh { border-color: #fff; }
.cv.lt { border-color: #ddd; width: 9px; height: 9px; border-width: 0 2px 2px 0; margin: -4px 0 0 6px; }

/* browser chrome */
.tabstrip { height: 52px; background: #e6e6e6; display: flex; align-items: flex-end; padding-left: 22px; position: relative; border-top: 1px solid #b9b9b9; box-sizing: border-box; }
.strip-ico { width: 20px; height: 20px; position: absolute; left: 22px; top: 22px; }
.btab { width: 299px; height: 40px; display: flex; align-items: center; box-sizing: border-box; padding: 0 12px 0 16px; border-radius: 8px 8px 0 0; color: #333; font-size: 14px; }
.btab:first-of-type { margin-left: 38px; }
.btab.on { background: #f7f7f7; }
.x-logo { width: 16px; height: 20px; margin-right: 15px; }
.btab-title { flex: 1; }
.btab-x { font-size: 12px; color: #333; }
.tab-sep { width: 1px; height: 26px; background: #888; margin: 0 0 6px 0; }
.tab-plus { font-size: 27px; font-weight: 300; color: #333; margin: 0 0 3px 14px; line-height: 34px; }
.win-btns { position: absolute; right: 0; top: 0; height: 52px; display: block; }
.wb { position: absolute; top: 13px; color: #888; font-size: 15px; }
.wb:first-child { right: 135px; }
.wb:last-child { right: 21px; }
.wb-box { position: absolute; width: 16px; height: 18px; right: 77px; top: 16px; }
.toolbar { height: 48px; background: #f7f7f7; display: flex; align-items: center; position: relative; border-bottom: 1px solid #cfcfcf; box-sizing: border-box; }
.nav { width: 24px; height: 24px; margin-left: 24px; flex: none; }
.nav + .nav { margin-left: 31px; }
.address { position: absolute; left: 183px; width: 1732px; height: 38px; top: 5px; background: #fff; border-radius: 19px; display: flex; align-items: center; }
.lock { width: 16px; height: 16px; margin-left: 23px; }
.url { margin-left: 21px; font-size: 16.300px; color: #6a6a6a; }
.url b { font-weight: 400; color: #222; }
.addr-icons { position: absolute; right: 18px; top: 8px; display: flex; gap: 25px; }
.addr-icons svg { width: 20px; height: 22px; }
.tool-ico { position: absolute; width: 24px; height: 24px; top: 12px; left: 1940px; }
.tool-ico + .tool-ico { left: 1994px; }
.avatar-ico { position: absolute; width: 26px; height: 26px; top: 11px; left: 2050px; }
.tool-more { position: absolute; left: 2111px; top: 10px; color: #222; font-size: 16px; font-weight: 700; }

.body { display: flex; height: 1227px; }
.app { flex: 1; min-width: 0; display: flex; flex-direction: column; background: linear-gradient(#302e41 0, #1f1e2d 60px); }
.app-head { height: 39px; flex: none; display: flex; align-items: center; padding-left: 849px; color: #fff; position: relative; }
.repo { font-size: 17.500px; font-weight: 600; }
.repo-user { font-size: 14.500px; color: #c8c8d0; margin-left: 1px; }
.branch { margin-left: 11px; height: 29px; width: 112px; box-sizing: border-box; border: 1px solid #d01c62; border-radius: 15px; display: flex; align-items: center; justify-content: center; color: #d01c62; font-size: 15.500px; gap: 7px; }
.branch svg { width: 13px; height: 20px; }
.term { position: absolute; left: 1978px; top: 9px; width: 26px; height: 21px; }
.work { flex: 1; min-height: 0; display: flex; padding-left: 3px; gap: 6px; }
.panel { background: #1f1e2c; border: 1px solid #302f3f; box-sizing: border-box; position: relative; display: flex; flex-direction: column; min-height: 0; }
.grow { flex: 1; }
.col-left { width: 326px; flex: none; display: flex; flex-direction: column; gap: 6px; }
.seq { height: 591px; flex: none; }
.tabs { height: 37px; flex: none; display: flex; align-items: stretch; padding-left: 10px; position: relative; }
.tab { display: flex; align-items: center; justify-content: center; box-sizing: border-box; background: #2a2936; color: #6d6c78; font-size: 17.500px; font-weight: 500; white-space: nowrap; overflow: hidden; }
.tab.on { background: #1f1e2c; color: #fff; border-bottom: 2px solid #d01c62; }
.tx { font-style: normal; font-size: 14px; color: #6a6a74; font-weight: 700; margin-left: 1px; }
.tab-more { color: #bbb; font-size: 13px; margin: 11px 0 0 10px; }
.maxi { position: absolute; right: 6px; top: 9px; width: 12px; height: 11px; border: 2px solid #777; border-top-width: 3px; box-sizing: border-box; }
.tools { height: 43px; flex: none; display: flex; align-items: center; justify-content: flex-end; gap: 13px; padding-right: 4px; border-bottom: 3px solid #2c2b3a; box-sizing: border-box; }
.tools svg { width: 20px; height: 20px; }
.dots { color: #fff; font-size: 11px; width: 20px; text-align: center; }
.seq-list { position: relative; flex: 1; overflow: hidden; padding-top: 2px; }
.seq-row { height: 45px; padding: 0 24px 0 20px; width: 316px; box-sizing: border-box; display: flex; align-items: center; justify-content: space-between; color: #eee; font-size: 17.400px; font-weight: 500; font-family: "Noto Sans CJK KR", sans-serif; }
.seq-row.sel { background: #45444f; }
.grip { width: 17px; height: 6px; border-top: 2px solid #777; border-bottom: 2px solid #777; margin-top: -6px; }
.seq-scroll { position: absolute; right: 0; top: 2px; width: 10px; height: 212px; background: #3a3945; }

.col-mid { width: 1415px; flex: none; display: flex; flex-direction: column; gap: 7px; }
.gfx { height: 705px; flex: none; }
.canvas { flex: 1; background: #000; position: relative; overflow: hidden; }
.scene { position: absolute; inset: 0; width: 100%; height: 100%; display: block; }
.thin { stroke-width: 1.500; vector-effect: non-scaling-stroke; }
.stud { stroke-width: 2.400; vector-effect: non-scaling-stroke; }
.scene-txt { font-family: "Liberation Sans", sans-serif; }
.view-btns { position: absolute; left: 10px; top: 10px; display: flex; gap: 1px; }
.vb { width: 31px; height: 33px; background: #1f1e2c; border-radius: 6px; display: flex; align-items: center; justify-content: center; }
.vb svg { width: 21px; height: 23px; }
.model-btns { position: absolute; right: 10px; top: 10px; display: flex; gap: 7px; }
.mb { height: 40px; width: 33px; background: #1f1e2c; border-radius: 6px; color: #ddd; font-size: 17px; font-weight: 600; display: flex; align-items: center; justify-content: center; }
.mb.wide { width: 113px; gap: 2px; }
.diamond { width: 14px; height: 14px; background: #777; transform: rotate(45deg); margin-right: 4px; }

.tbl-panel { background: #1f1e2c; }
.thin-tabs .tab { font-family: "Noto Sans CJK KR", sans-serif; font-size: 17.400px; }
.tbl-tools { height: 44px; flex: none; border-bottom: 3px solid #2c2b3a; box-sizing: border-box; }
.tbl-gap { height: 51px; flex: none; }
.tbl { height: 334px; flex: none; width: 1399px; overflow: hidden; margin-left: 1px; border-top: 1px solid #5a5a60; box-sizing: border-box; }
.trow { display: grid; grid-template-columns: 63px repeat(10, 125px) 86px; border-bottom: 1px solid #5a5a60; box-sizing: border-box; width: 1399px; }
.trow span { display: block; text-align: center; border-right: 1px solid #5a5a60; box-sizing: border-box; padding: 0 5px; overflow: hidden; white-space: nowrap; font-size: 17px; }
.trow span:first-child { background: #2e2c3d; color: #ccc; }
.trow span:last-child { border-right: 0; padding: 0; }
.thead { height: 32px; background: #2e2c3d; color: #ccc; }
.thead span { line-height: 30px; }
.tfilter { height: 27px; background: #2e2c3d; }
.tfilter svg { width: 18px; height: 18px; float: right; margin: 7px 4px 0 0; }
.tbody { height: 29.600px; color: #eee; }
.tbody span { line-height: 29px; font-family: "Noto Sans", "Noto Sans CJK KR", sans-serif; }
.tbl-scroll { height: 10px; flex: 1; position: relative; background: #1f1e2c; }
.tbl-thumb { position: absolute; left: 0; top: 0; bottom: 0; width: 1158px; background: #2e2c3d; }
.tbl-corner { position: absolute; left: 1400px; top: 0; width: 10px; bottom: 0; background: #fff; }

.col-right { width: 260px; flex: none; }
.col-right .tabs { padding-left: 9px; }
.col-right .tab-more { margin-left: 4px; }
.col-right .tools { border-bottom: 0; padding-right: 4px; gap: 14px; }
.col-far { flex: 1; position: relative; }
.far-save { position: absolute; left: 23px; top: 17px; width: 24px; height: 24px; }
.far-avatar { position: absolute; left: 13px; bottom: 21px; width: 40px; height: 40px; border-radius: 50%; background: #6a6a6a; color: #2a2a33; font-size: 26px; display: flex; align-items: center; justify-content: center; }

.edge { width: 58px; flex: none; background: #f5f5f5; box-shadow: inset 6px 0 6px -6px #0002; position: relative; display: flex; flex-direction: column; align-items: center; padding-top: 18px; gap: 29.500px; box-sizing: border-box; }
.edge > svg { width: 22px; height: 23px; flex: none; }
.edge-plus { margin-top: 4px; }
.edge-foot { position: absolute; bottom: 14px; left: 17px; display: flex; flex-direction: column; gap: 30px; border-top: 1px solid #ccc; padding-top: 20px; width: 40px; margin-left: -8px; align-items: center; }
.edge-foot svg { width: 22px; height: 22px; }

/* excel */
.xl { position: absolute; left: 1192px; top: 208px; width: 904px; height: 1034px; background: #f3f3f3; border-radius: 10px; box-shadow: 0 2px 10px #0007; display: flex; flex-direction: column; font-family: "Noto Sans", "Noto Sans CJK KR", sans-serif; color: #222; overflow: hidden; }
.xl-title { height: 62px; flex: none; position: relative; }
.xl-title > * { position: absolute; }
.xl-logo { left: 20px; top: 20px; width: 20px; height: 22px; }
.xl-dim { color: #b0b0b0; font-size: 16px; top: 19px; font-family: "Noto Sans CJK KR", sans-serif; }
.t-auto { left: 62px; }
.toggle { left: 136px; top: 18px; width: 52px; height: 24px; border: 1px solid #bbb; border-radius: 13px; background: #fff; display: flex; align-items: center; justify-content: flex-end; padding-right: 8px; box-sizing: border-box; font-size: 14px; color: #aaa; font-family: "Noto Sans CJK KR", sans-serif; }
.toggle i { position: absolute; left: 4px; top: 3px; width: 18px; height: 18px; border-radius: 50%; background: #aaa; }
.xl-save { left: 202px; top: 19px; width: 20px; height: 24px; }
.t-beam { left: 248px; font-family: "Noto Sans", sans-serif; font-size: 15.500px; }
.t-beam .cv { margin-left: 5px; }
.xl-search { left: 438px; top: 20px; width: 20px; height: 24px; }
.t-user { left: 505px; font-family: "Noto Sans", sans-serif; font-size: 15px; top: 20px; }
.xl-u { left: 621px; top: 16px; width: 30px; height: 30px; border-radius: 50%; background: #e3008c; color: #fff; font-size: 13px; display: flex; align-items: center; justify-content: center; }
.xl-pen { left: 685px; top: 18px; width: 22px; height: 26px; }
.t-min { left: 750px; }
.xl-max { left: 806px; top: 22px; width: 16px; height: 18px; }
.t-close { left: 867px; }
.xl-menu { height: 37px; flex: none; display: flex; align-items: center; padding-left: 23px; gap: 25px; position: relative; font-family: "Noto Sans CJK KR", sans-serif; font-size: 17.500px; word-spacing: 6px; }
.menu-it { position: relative; line-height: 37px; }
.menu-it.on { margin-left: 4px; }
.menu-it.on::after { content: ""; position: absolute; left: 0; right: 0; bottom: 1px; height: 3px; background: #107c41; border-radius: 2px; }
.menu-right { position: absolute; left: 752px; top: 3px; display: flex; gap: 10px; }
.memo-btn { width: 76px; height: 30px; border: 1px solid #aaa; border-radius: 5px; background: #fff; display: flex; align-items: center; justify-content: center; gap: 4px; font-size: 16.500px; box-sizing: border-box; }
.memo-btn svg { width: 15px; height: 16px; }
.share-btn { width: 51px; height: 30px; border-radius: 5px; background: #107c41; display: flex; align-items: center; justify-content: center; gap: 10px; color: #fff; }
.share-btn svg { width: 17px; height: 18px; }
.ribbon { height: 125px; flex: none; margin: 0 11px; background: #fff; border-radius: 8px; box-shadow: 0 1px 3px #0003; display: flex; position: relative; font-family: "Noto Sans CJK KR", sans-serif; font-size: 15.500px; box-sizing: border-box; }
.rg { position: relative; border-right: 1px solid #ddd; box-sizing: border-box; margin: 6px 0 7px; flex: none; }
.rg-label { position: absolute; bottom: -2px; left: 0; right: 0; text-align: center; font-size: 15px; white-space: nowrap; }
.undo { padding: 1px 0 0 18px; display: grid; grid-template-columns: 22px 16px; row-gap: 12px; align-items: center; justify-items: center; }
.undo svg { width: 20px; height: 28px; }
.clip { display: flex; padding-left: 10px; }
.paste { width: 66px; display: flex; flex-direction: column; align-items: center; }
.paste svg { width: 35px; height: 42px; margin: 3px 0 0; }
.paste span { line-height: 22px; white-space: nowrap; }
.paste .cv { margin-top: 3px; }
.clip-side { display: flex; flex-direction: column; align-items: center; margin-left: 13px; gap: 7px; }
.clip-side > svg { width: 16px; height: 24px; }
.copy { display: flex; gap: 10px; margin-left: 24px; align-items: center; }
.copy svg { width: 20px; height: 24px; }
.launch { position: absolute; right: 3px; bottom: 1px; width: 10px; height: 10px; }
.big { display: flex; flex-direction: column; align-items: center; }
.big > .cv { margin-top: 5px; }
.ga { font-size: 34px; line-height: 32px; height: 30px; font-weight: 300; }
.ga-bar { width: 40px; height: 10px; background: #222; margin-bottom: -3px; }
.big-t { line-height: 24px; margin-top: 2px; white-space: nowrap; }
.big-t.sec { margin-top: -2px; }
.big-t.sec .cv { margin-left: 3px; position: relative; top: -3px; }
.big-ic { width: 36px; height: 41px; margin-bottom: -2px; flex: none; }
.big-ic.cell-ic { height: 43px; margin-bottom: -4px; }
.pct { font-size: 36px; font-weight: 300; line-height: 41px; height: 41px; margin-bottom: -2px; font-family: "Noto Sans", sans-serif; }
.styles { padding: 2px 0 0 15px; display: flex; flex-direction: column; gap: 10px; }
.styles div { display: flex; align-items: center; gap: 6px; height: 22px; white-space: nowrap; }
.styles svg { width: 20px; height: 22px; flex: none; }
.rb-collapse { position: absolute; right: 12px; bottom: 14px; width: 8px; height: 8px; border-width: 0 1.700px 1.700px 0; }
.formula { height: 34px; flex: none; margin: 10px 11px 0 12px; display: flex; font-size: 17px; }
.name-box { width: 125px; box-sizing: border-box; background: #fff; border: 1px solid #ddd; border-radius: 5px; padding: 0 9px 0 6px; display: flex; align-items: center; justify-content: space-between; }
.f-dots { width: 27px; text-align: center; line-height: 32px; font-size: 18px; }
.fx-box { width: 90px; box-sizing: border-box; background: #fff; border: 1px solid #ddd; border-radius: 5px; display: flex; align-items: center; justify-content: space-around; padding: 0 4px; color: #bbb; }
.fx-box i { color: #222; font-family: "Liberation Serif", serif; font-weight: 700; font-size: 20px; }
.f-input { width: 633px; margin-left: 6px; box-sizing: border-box; background: #fff; border: 1px solid #ddd; border-radius: 5px; display: flex; align-items: center; justify-content: flex-end; padding-right: 9px; }
.name-box .cv, .f-input .cv { width: 8px; height: 8px; border-width: 0 1.700px 1.700px 0; }
.sheet-wrap { flex: none; margin-top: 14px; height: 695px; }
.col-heads { display: flex; height: 23px; padding-left: 2px; font-size: 14.500px; color: #333; }
.corner { width: 36px; flex: none; position: relative; }
.corner i { position: absolute; right: 2px; bottom: 1px; width: 0; height: 0; border-left: 20px solid transparent; border-bottom: 20px solid #ddd; }
.ch { width: 21px; flex: none; text-align: center; line-height: 19px; border-right: 1px solid #e2e2e2; box-sizing: border-box; white-space: nowrap; }
.ch.ad { width: 35px; }
.ch.wide { width: 60px; }
.sheet-body { display: flex; height: 672px; padding-left: 2px; position: relative; }
.row-heads { width: 34px; flex: none; display: flex; flex-direction: column; font-size: 15px; color: #333; }
.row-heads span { height: 21px; line-height: 20px; text-align: center; padding-right: 3px; box-sizing: border-box; }
.sheet { width: 613px; flex: none; box-sizing: border-box; border: solid #0a0ac0; border-width: 2px 2px 0; background-color: #fff; background-image: linear-gradient(to right, #dcdcdc 1px, transparent 1px), linear-gradient(to bottom, #dcdcdc 1px, transparent 1px); background-size: 21px 21px; background-position: -1px -1px; display: grid; grid-template-columns: repeat(29, 21px); grid-template-rows: repeat(32, 21px); position: relative; font-family: "Liberation Sans", "Noto Sans CJK KR", sans-serif; font-size: 14px; color: #111; }
.cell { display: flex; align-items: center; justify-content: center; white-space: pre; overflow: visible; line-height: 21px; min-width: 0; }
.cell.l { justify-content: flex-start; padding-left: 2px; }
.cell.r { justify-content: flex-end; padding-right: 1px; }
.cell.i { font-style: italic; }
.cell.b { font-weight: 700; font-size: 16.500px; }
.cell.ko { font-size: 16px; }
.cell.lg { font-size: 18px; }
.cell.sm { font-size: 12px; }
.cell.ti .tl { font-style: italic; font-size: 14px; }
.cell.y { background: #ffff99; color: #e00000; }
.cell sub { font-size: 10px; line-height: 0; align-self: flex-end; margin: 0 0 5px 1px; }
.cell.l:not(.i) sub { font-style: normal; }
.watermark { position: absolute; left: 213px; top: 504px; font-family: "Noto Sans CJK KR", sans-serif; font-size: 52px; line-height: 62px; color: #9a9a9a; white-space: nowrap; pointer-events: none; z-index: 1; }
.gray { width: 232px; flex: none; background: #a0a0a0; overflow: hidden; }
.g-grid { display: grid; grid-template-columns: 35px 60px 60px 61px 60px; grid-template-rows: repeat(32, 21px); font-family: "Liberation Sans", "Noto Sans CJK KR", sans-serif; font-size: 14px; color: #111; }
.g-box { border: 1px solid #111; display: flex; align-items: center; margin: 0 -1px -1px 0; padding: 0 2px; overflow: hidden; }
.g-box.b1 { justify-content: center; font-weight: 700; font-family: "Noto Sans CJK KR", sans-serif; font-size: 15px; }
.g-box.red { justify-content: flex-end; color: #e00000; font-weight: 700; font-size: 16px; padding-right: 4px; }
.g-box.rt { justify-content: flex-end; }
.g-note { white-space: nowrap; padding-left: 3px; line-height: 21px; font-family: "Noto Sans CJK KR", "Liberation Sans", sans-serif; font-size: 15.500px; }
.g-note.six { padding-left: 47px; font-size: 14px; }
.g-note.sixb { padding-left: 21px; font-size: 14px; }
.v-scroll { width: 19px; flex: 1; position: relative; }
.v-scroll .up { position: absolute; left: 4px; top: -26px; border: 6px solid transparent; border-bottom: 9px solid #777; border-top: 0; }
.v-scroll .thumb { position: absolute; left: 5px; top: -7px; width: 8px; height: 97px; background: #707070; border-radius: 4px; }
.v-scroll .down { position: absolute; left: 4px; bottom: 4px; border: 6px solid transparent; border-top: 9px solid #666; border-bottom: 0; }
.sheet-tabs { height: 30px; flex: none; position: relative; display: flex; font-size: 16.500px; color: #444; padding-left: 104px; }
.st-nav { position: absolute; left: 27px; top: 3px; color: #bbb; font-size: 17px; }
.st { height: 30px; line-height: 28px; box-sizing: border-box; border-right: 1px solid #ccc; white-space: nowrap; text-align: center; }
.st:nth-of-type(2) { width: 81px; color: #107c41; background: #fff; border-bottom: 2px solid #107c41; border-right: 0; }
.st:nth-of-type(3) { width: 95px; }
.st:nth-of-type(4) { width: 103px; }
.st-add { position: absolute; left: 417px; top: 5px; width: 20px; height: 20px; }
.st-dots { position: absolute; left: 535px; top: 0; font-size: 18px; font-weight: 700; line-height: 28px; }
.h-scroll { position: absolute; left: 558px; top: 3px; width: 326px; height: 24px; }
.h-scroll .thumb { position: absolute; left: 19px; top: 6px; width: 106px; height: 11px; background: #707070; border-radius: 6px; }
.h-scroll .l { position: absolute; left: 7px; top: 6px; border: 6px solid transparent; border-right: 8px solid #555; border-left: 0; }
.h-scroll .r { position: absolute; right: 13px; top: 6px; border: 6px solid transparent; border-left: 8px solid #555; border-right: 0; }
.status { height: 25px; margin-top: 2px; flex: none; position: relative; display: flex; align-items: center; font-family: "Noto Sans CJK KR", sans-serif; font-size: 16.500px; color: #333; background: #f3f3f3; }
.s-ready { margin: 0 20px 0 10px; font-size: 15.500px; }
.s-acc { width: 22px; height: 22px; margin: 0 3px 0 2px; }
.s-views { position: absolute; left: 526px; top: 0; display: flex; align-items: center; height: 25px; }
.s-views svg { width: 20px; height: 20px; }
.s-views > svg { margin-right: 30px; }
.s-on { width: 50px; height: 25px; background: #e4e4e4; margin-left: -17px; display: flex; align-items: center; justify-content: center; }
.zoom { position: absolute; left: 670px; top: 0; display: flex; align-items: center; height: 25px; gap: 5px; font-size: 15px; font-family: "Noto Sans", sans-serif; }
.z-line { display: block; width: 124px; height: 1px; background: #444; position: relative; }
.z-line b { position: absolute; left: 61px; top: -7px; width: 5px; height: 15px; background: #555; }
.s-pct { position: absolute; left: 841px; font-size: 14.500px; font-family: "Noto Sans", sans-serif; }
</style>

<style>
html, body { margin: 0; overflow: hidden; background: #1e1d2b; }
</style>
